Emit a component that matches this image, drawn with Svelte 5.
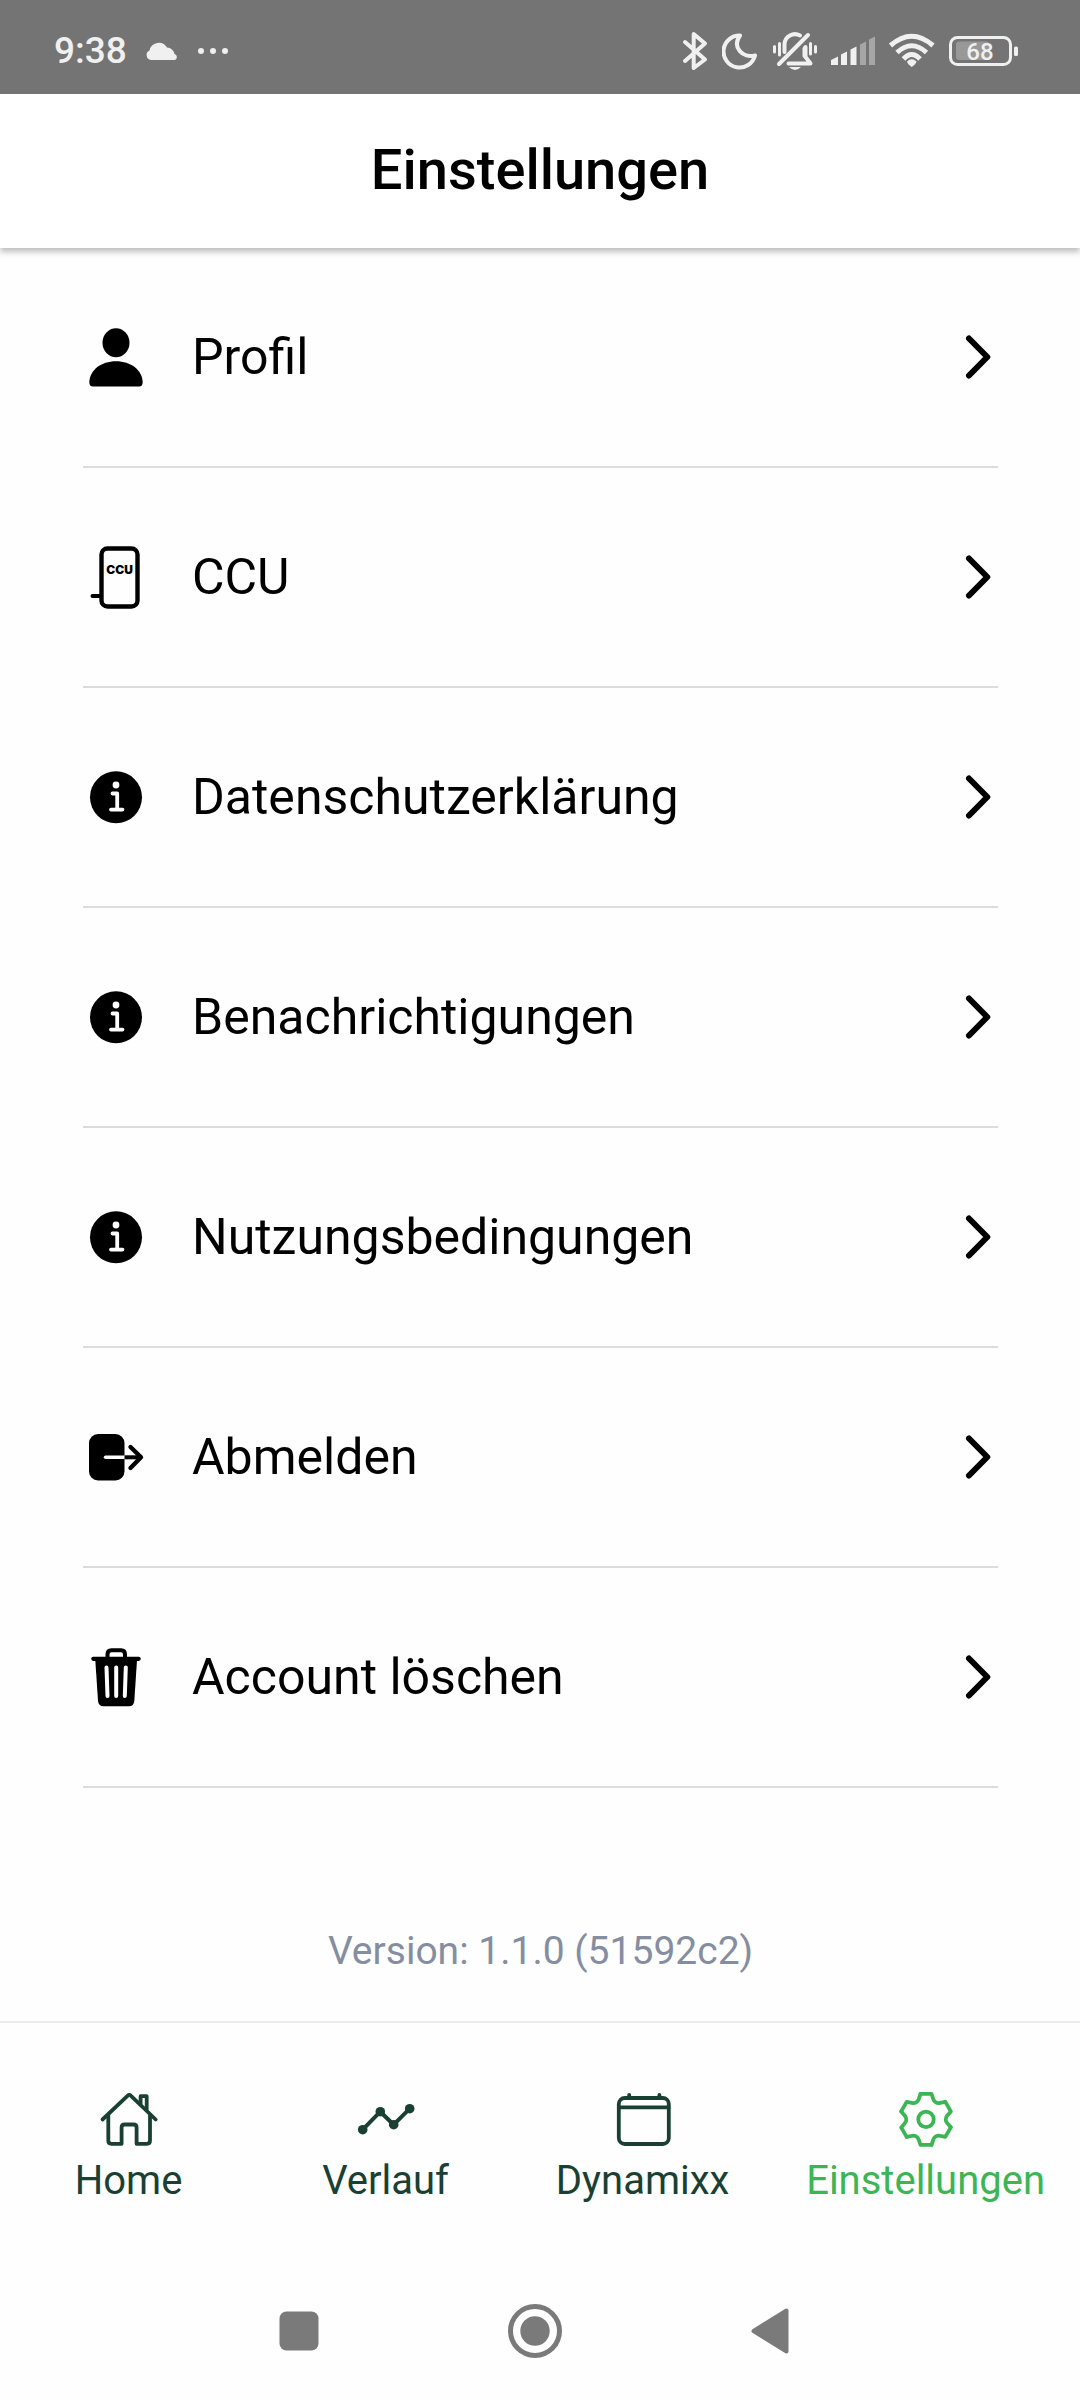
<script>
  const ITEMS = [
    { label: "Profil", icon: "user" },
    { label: "CCU", icon: "ccu" },
    { label: "Datenschutzerklärung", icon: "info" },
    { label: "Benachrichtigungen", icon: "info" },
    { label: "Nutzungsbedingungen", icon: "info" },
    { label: "Abmelden", icon: "logout" },
    { label: "Account löschen", icon: "trash" }
  ]

  const TABS = [
    { id: "home", label: "Home" },
    { id: "history", label: "Verlauf" },
    { id: "dynamixx", label: "Dynamixx" },
    { id: "settings", label: "Einstellungen" }
  ]

  let active = $state("settings")
</script>

<div class="screen">
  <div class="status">
    <div class="status__group">
      <span class="status__time">9:38</span>
      <svg width="34" height="20" viewBox="0 0 34 20" fill="#f0f0f0" aria-hidden="true">
        <path d="M6 19 A5 5 0 0 1 4.5 9.5 A9.5 9.5 0 0 1 22 6.5 A8.5 8.5 0 0 1 29.5 13 A3.2 3.2 0 0 1 30 19 Z" />
      </svg>
      <svg width="32" height="8" viewBox="0 0 32 8" fill="#f0f0f0" aria-hidden="true">
        <circle cx="4" cy="4" r="3" />
        <circle cx="16" cy="4" r="3" />
        <circle cx="28" cy="4" r="3" />
      </svg>
    </div>
    <div class="status__group status__group--right">
      <svg width="28" height="40" viewBox="0 0 28 40" fill="none" stroke="#f0f0f0" stroke-width="4" stroke-linecap="round" stroke-linejoin="round" aria-hidden="true">
        <path d="M3 11 L23 28.5 L11.7 37 V3 L23 12.5 L3 30" />
      </svg>
      <svg width="38" height="40" viewBox="0 0 38 40" fill="none" stroke="#f0f0f0" stroke-width="4" stroke-linejoin="round" aria-hidden="true">
        <path d="M18 4.5 A16 16 0 1 0 33 24.5 C21 27.5 9.5 16.5 18 4.5 Z" />
      </svg>
      <svg width="46" height="40" viewBox="0 0 46 40" fill="none" stroke="#f0f0f0" stroke-width="4" stroke-linecap="round" stroke-linejoin="round" aria-hidden="true">
        <path d="M7 33 L36 4" />
        <path d="M12.5 21 V13 A10.5 10.5 0 0 1 28 4.5" />
        <path d="M16.5 32.5 H38.5 L33.5 26 V16 L32.5 17.5 V25" />
        <path d="M17 36 H29 Q23 42 17 36 Z" fill="#f0f0f0" stroke="none" />
        <path d="M2.5 15.5 V21 M7.5 12.5 V24 M38.5 12.5 V23 M43.5 15.5 V21" stroke-width="3" />
      </svg>
      <svg width="46" height="30" viewBox="0 0 46 30" fill="#f0f0f0" aria-hidden="true">
        <path d="M1 24 L8 20.5 V29 H1 Z" />
        <path d="M11 18.5 L17 15.5 V29 H11 Z" />
        <path d="M20.5 13.5 L26.5 10.5 V29 H20.5 Z" />
        <path d="M30 8.5 L36 5.5 V29 H30 Z" fill="#a6a6a6" />
        <path d="M39 3.5 L45 0.5 V29 H39 Z" fill="#a6a6a6" />
      </svg>
      <svg width="48" height="36" viewBox="0 0 48 36" fill="none" stroke="#f0f0f0" stroke-width="5" aria-hidden="true">
        <path d="M2.5 12.5 Q23.7 -6 45 12.5" />
        <path d="M9 19.5 Q23.7 6 38.5 19.5" />
        <path d="M15.5 26 Q23.7 17 32 26" />
        <path d="M19 28.5 Q23.7 24 28.5 28.5 Q28 31 23.7 34 Q19.5 31 19 28.5 Z" fill="#f0f0f0" stroke="none" />
      </svg>
      <svg width="72" height="32" viewBox="0 0 72 32" aria-hidden="true">
        <rect x="2.5" y="2.5" width="60" height="27" rx="7" fill="none" stroke="#f0f0f0" stroke-width="3" />
        <rect x="8" y="6.5" width="33" height="18.5" rx="3" fill="#989898" />
        <rect x="66" y="11.5" width="4" height="9.5" rx="1.5" fill="#f0f0f0" />
        <text class="battery" x="32" y="25" text-anchor="middle">68</text>
      </svg>
    </div>
  </div>

  <header class="header">
    <h1>Einstellungen</h1>
  </header>

  <main class="content">
    <ul class="list">
      {#each ITEMS as item}
        <li>
          <button type="button" class="row">
            <svg class="row__icon" width="66" height="66" viewBox="0 0 66 66" aria-hidden="true">
              {#if item.icon === "user"}
                <ellipse cx="33" cy="18.8" rx="13.5" ry="14.5" />
                <path d="M10 62.5 Q6.3 62.5 6.3 58 C7 46 18 37.3 33 37.3 C48 37.3 59 46 59.7 58 Q59.7 62.5 56 62.5 Z" />
              {:else if item.icon === "ccu"}
                <rect x="18.5" y="4.5" width="36" height="58" rx="6" fill="none" stroke="#000" stroke-width="4.4" />
                <path d="M9.5 52 H18" stroke="#000" stroke-width="4" stroke-linecap="round" />
                <text class="ccu" x="36.5" y="30" text-anchor="middle">CCU</text>
              {:else if item.icon === "info"}
                <circle cx="33" cy="33.3" r="26" />
                <circle cx="33" cy="21" r="3.4" fill="#fff" />
                <path d="M29.5 29.5 H34.2 V45.6 M28 45.6 H39.5" fill="none" stroke="#fff" stroke-width="3.8" stroke-linecap="round" stroke-linejoin="round" />
              {:else if item.icon === "logout"}
                <rect x="6" y="10" width="35.5" height="46.5" rx="9" />
                <path d="M22.5 33.3 H41.5" stroke="#fff" stroke-width="3.4" stroke-linecap="round" />
                <path d="M41.5 33.3 H58" stroke="#000" stroke-width="4" />
                <path d="M47.5 23 L58 33.3 L47.5 44" fill="none" stroke="#000" stroke-width="4.4" stroke-linecap="round" stroke-linejoin="round" />
              {:else}
                <path d="M24.5 14 V10.5 Q24.5 6.2 28.5 6.2 H38 Q42 6.2 42 10.5 V14" fill="none" stroke="#000" stroke-width="4" />
                <path d="M10.3 14.8 H55.7" stroke="#000" stroke-width="4.2" stroke-linecap="round" />
                <path d="M12.3 16 H54 L51.3 57 Q50.8 62.3 46 62.3 H20.5 Q15.5 62.3 15 57 Z" />
                <path d="M23.5 23.5 L24.5 52 M33.2 23.5 V52 M42.8 23.5 L41.8 52" stroke="#fff" stroke-width="4" stroke-linecap="round" />
              {/if}
            </svg>
            <span class="row__label">{item.label}</span>
            <svg width="33" height="44" viewBox="0 0 33 44" fill="none" stroke="#000" stroke-width="6" stroke-linecap="round" stroke-linejoin="round" aria-hidden="true">
              <path d="M4 3.5 L22.3 22 L4 40.5" />
            </svg>
          </button>
        </li>
      {/each}
    </ul>
    <p class="version">Version: 1.1.0 (51592c2)</p>
  </main>

  <nav class="tabs">
    {#each TABS as tab}
      <button
        type="button"
        class="tab"
        class:tab--on={active === tab.id}
        onclick={() => (active = tab.id)}
      >
        <svg width="60" height="60" viewBox="0 0 60 60" fill="none" stroke="currentColor" stroke-width="3.8" stroke-linecap="round" stroke-linejoin="round" aria-hidden="true">
          {#if tab.id === "home"}
            <path d="M3.5 29.5 L28.5 5.8 Q30.3 4 32 5.8 L56.7 29.5" />
            <path d="M9.3 25 V50.5 Q9.3 53.8 12.5 53.8 H22.6 V37.5 Q22.6 34.5 25.6 34.5 H34.5 Q37.6 34.5 37.6 37.5 V53.8 H47.8 Q51 53.8 51 50.5 V25" />
            <path d="M41.6 14 V6.2 H47.7 V19.5" />
          {:else if tab.id === "history"}
            <path d="M6.7 39.7 L24.3 21.7 L37.7 34.7 L53.7 18.7" stroke-width="4" />
            <g fill="currentColor" stroke="none">
              <circle cx="6.7" cy="39.7" r="4.8" />
              <circle cx="24.3" cy="21.7" r="4.8" />
              <circle cx="37.7" cy="34.7" r="4.8" />
              <circle cx="53.7" cy="18.7" r="4.8" />
            </g>
          {:else if tab.id === "dynamixx"}
            <rect x="5.8" y="8" width="50" height="46" rx="6" />
            <path d="M6 17.4 H55.6 M16.2 5 V8 M46.4 5 V8" />
          {:else}
            <g transform="translate(30 29.4)">
              <circle r="7.7" />
              {#each [0, 60, 120, 180, 240, 300] as angle}
                <path d="M-5.5 -25.5 H5.5 L7.2 -20.5 C8 -17.5 11.2 -15.7 14.1 -16.5 L19.3 -17.5" transform="rotate({angle})" />
              {/each}
            </g>
          {/if}
        </svg>
        <span>{tab.label}</span>
      </button>
    {/each}
  </nav>

  <div class="system">
    <button type="button" aria-label="Letzte Apps">
      <svg width="56" height="56" viewBox="0 0 56 56" fill="#7a7a7a">
        <rect x="8.5" y="8.5" width="39" height="39" rx="7" />
      </svg>
    </button>
    <button type="button" aria-label="Startbildschirm">
      <svg width="56" height="56" viewBox="0 0 56 56" fill="#7a7a7a">
        <circle cx="28" cy="28" r="24.5" fill="none" stroke="#7a7a7a" stroke-width="5" />
        <circle cx="28" cy="28" r="14.7" />
      </svg>
    </button>
    <button type="button" aria-label="Zurück">
      <svg width="56" height="56" viewBox="0 0 56 56" fill="#7a7a7a" stroke="#7a7a7a" stroke-width="4" stroke-linejoin="round">
        <path d="M10.5 28 L43.5 7.5 V48.5 Z" />
      </svg>
    </button>
  </div>
</div>

<style>
  :global(body) {
    margin: 0;
    background: #fefefe;
  }

  .screen {
    display: flex;
    flex-direction: column;
    min-height: 100vh;
    font-family: Roboto, "Liberation Sans", sans-serif;
    color: #000;
  }

  svg {
    display: block;
    flex: none;
  }

  button {
    margin: 0;
    padding: 0;
    border: 0;
    background: none;
    font: inherit;
    color: inherit;
    cursor: pointer;
  }

  .status {
    display: flex;
    align-items: center;
    justify-content: space-between;
    box-sizing: border-box;
    height: 94px;
    padding: 7px 60px 0 54px;
    background: #747474;
    color: #f0f0f0;
  }

  .status__group {
    display: flex;
    align-items: center;
    gap: 18px;
  }

  .status__group--right {
    gap: 12px;
  }

  .status__time {
    font-size: 37px;
    font-weight: 500;
    line-height: 44px;
  }

  .battery {
    font-size: 24px;
    font-weight: 500;
    fill: #f0f0f0;
  }

  .header {
    display: flex;
    align-items: center;
    justify-content: center;
    box-sizing: border-box;
    height: 154px;
    padding-bottom: 2px;
    background: #fff;
    box-shadow: 0 4px 6px rgba(0, 0, 0, 0.25);
  }

  h1 {
    margin: 0;
    font-size: 56px;
    font-weight: 500;
    line-height: 66px;
  }

  .content {
    flex: 1;
    padding: 0 82px 0 83px;
  }

  .list {
    margin: 0;
    padding: 0;
    list-style: none;
  }

  .row {
    display: flex;
    align-items: center;
    width: 100%;
    height: 220px;
    border-bottom: 2px solid #dcdcdc;
    text-align: left;
  }

  .row__icon {
    margin-right: 43px;
  }

  .row__label {
    flex: 1;
    font-size: 50px;
    line-height: 60px;
  }

  .ccu {
    font-family: Inter, "Liberation Sans", sans-serif;
    font-size: 12px;
    font-weight: 900;
  }

  .version {
    margin: 140px 0 47px;
    font-size: 39px;
    line-height: 46px;
    text-align: center;
    color: #858ea1;
  }

  .tabs {
    display: flex;
    border-top: 2px solid #ececec;
  }

  .tab {
    display: flex;
    flex: 1 1 0;
    flex-direction: column;
    align-items: center;
    gap: 8px;
    padding: 67px 35px 58px;
    font-size: 40px;
    line-height: 46px;
    color: #1a4034;
  }

  .tab--on {
    color: #3cb554;
  }

  .system {
    display: flex;
    justify-content: center;
    align-items: center;
    gap: 180px;
    height: 138px;
    padding-right: 10px;
  }
</style>
